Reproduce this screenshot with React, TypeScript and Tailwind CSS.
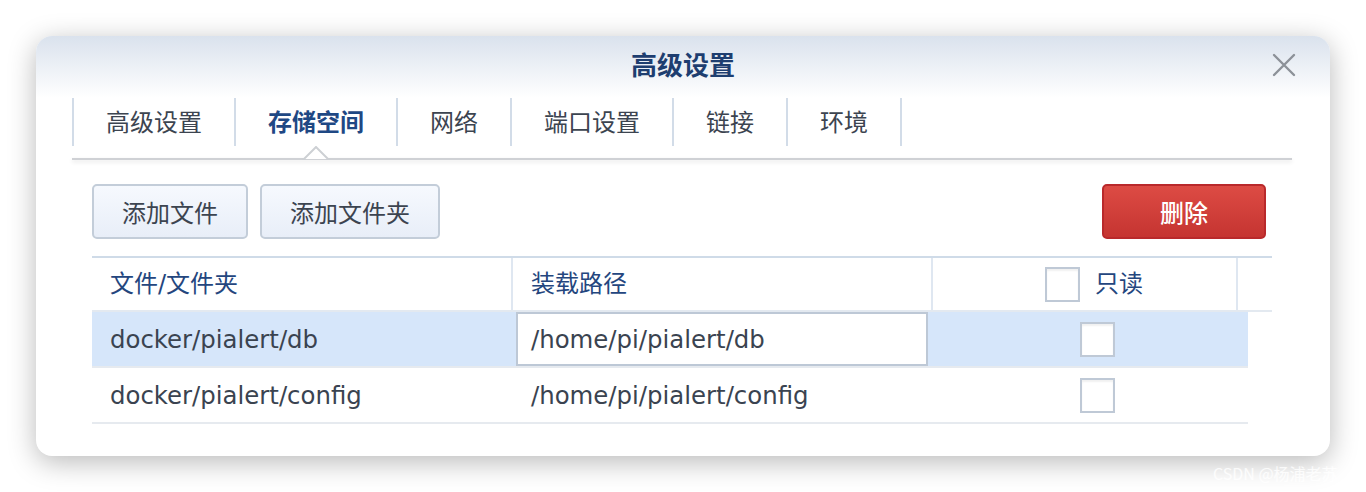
import React from "react";

const tabs = ["高级设置", "存储空间", "网络", "端口设置", "链接", "环境"];

const rows = [
  { file: "docker/pialert/db", mount: "/home/pi/pialert/db", selected: true },
  { file: "docker/pialert/config", mount: "/home/pi/pialert/config", selected: false },
];

function Checkbox() {
  return <div className="w-[35px] h-[35px] border-2 border-[#bfc9d6] bg-white shadow-[inset_0_2px_2px_rgba(0,0,0,0.06)]" />;
}

export default function App() {
  return (
    <div className="relative w-full h-[492px] bg-white pt-[36px] pl-[36px] font-['DejaVu_Sans','Noto_Sans_CJK_SC',sans-serif]">
      <div className="w-[1294px] h-[420px] rounded-[16px] bg-white shadow-[0_6px_28px_rgba(0,0,0,0.28)] overflow-hidden">
        {/* title bar */}
        <div className="relative h-[62px] flex items-center justify-center pb-[6px] bg-linear-to-b from-[#dae2ed] to-white">
          <span className="text-[26px] leading-none font-bold text-[#1e3e70] font-['Noto_Sans_CJK_SC',sans-serif]">高级设置</span>
          <svg className="absolute right-[34px] top-[17px]" width="24" height="24" viewBox="0 0 24 24">
            <path d="M2 2 L22 22 M22 2 L2 22" stroke="#8c9198" strokeWidth="2.4" strokeLinecap="round" />
          </svg>
        </div>

        {/* tabs */}
        <div className="ml-[36px] mr-[38px]">
          <div className="flex h-[48px] border-l-2 border-[#d2dce8] font-['Noto_Sans_CJK_SC',sans-serif]">
            {tabs.map((t, i) => (
              <div
                key={t}
                className={
                  "relative flex items-center pb-[3px] px-[32px] border-r-2 border-[#d2dce8] text-[24px] leading-none " +
                  (i === 1 ? "font-bold text-[#1f4884]" : "text-[#3c4450]")
                }
              >
                {t}
                {i === 1 && (
                  <svg className="absolute left-1/2 -translate-x-1/2 top-[48px]" width="28" height="14" viewBox="0 0 28 14">
                    <path d="M0 13 L2 13 L14 1 L26 13 L28 13" fill="white" stroke="#cdd0d4" strokeWidth="2" />
                  </svg>
                )}
              </div>
            ))}
          </div>
          <div className="h-[12px]" />
          <div className="h-[2px] bg-[#cfd1d5] shadow-[0_2px_4px_rgba(0,0,0,0.12)]" />
        </div>

        {/* content */}
        <div className="pl-[56px] pr-[58px] pt-[24px]">
          <div className="flex items-center gap-[12px] h-[55px] font-['Noto_Sans_CJK_SC',sans-serif]">
            <button className="h-[55px] px-[28px] rounded-[5px] border-2 border-[#c3cdd9] bg-linear-to-b from-[#f6f9fe] to-[#e8eef8] text-[24px] text-[#3c4450]">
              添加文件
            </button>
            <button className="h-[55px] px-[28px] rounded-[5px] border-2 border-[#c3cdd9] bg-linear-to-b from-[#f6f9fe] to-[#e8eef8] text-[24px] text-[#3c4450]">
              添加文件夹
            </button>
            <div className="flex-1" />
            <button className="mr-[6px] h-[55px] w-[164px] rounded-[5px] border-2 border-[#b9292b] bg-linear-to-b from-[#dd4b44] to-[#c53431] text-[24px] font-medium text-white">
              删除
            </button>
          </div>

          {/* table */}
          <div className="mt-[17px] border-t-2 border-[#cfdbe8]">
            <div className="grid grid-cols-[421px_420px_305px_34px] h-[54px] border-b-2 border-[#e3e9f0] text-[24px] text-[#24467e]">
              <div className="flex items-center pl-[18px] border-r-2 border-[#dfe7f1]">文件/文件夹</div>
              <div className="flex items-center pl-[18px] border-r-2 border-[#dfe7f1]">装载路径</div>
              <div className="flex items-center pl-[112px] gap-[15px] border-r-2 border-[#dfe7f1]">
                <Checkbox />
                <span>只读</span>
              </div>
              <div />
            </div>
            {rows.map((r) => (
              <div
                key={r.file}
                className={
                  "grid grid-cols-[421px_420px_315px] w-[1156px] h-[56px] border-b-2 border-[#e6eaef] text-[24.4px] text-[#3a4350] " +
                  (r.selected ? "bg-[#d6e6fa]" : "bg-white")
                }
              >
                <div className="flex items-center pl-[18px] pt-[3px]">{r.file}</div>
                <div className="flex items-center">
                  {r.selected ? (
                    <div className="ml-[3px] w-[412px] h-[54px] flex items-center pl-[13px] pt-[3px] border-2 border-[#bdc8d6] bg-white">
                      {r.mount}
                    </div>
                  ) : (
                    <span className="pl-[18px] pt-[3px]">{r.mount}</span>
                  )}
                </div>
                <div className="flex items-center pl-[147px]">
                  <Checkbox />
                </div>
              </div>
            ))}
          </div>
        </div>
      </div>

      <span className="absolute left-[1213px] top-[461px] text-[16px] text-white/80 font-['Noto_Sans_CJK_SC',sans-serif]">
        CSDN @杨浦老苏
      </span>
    </div>
  );
}
